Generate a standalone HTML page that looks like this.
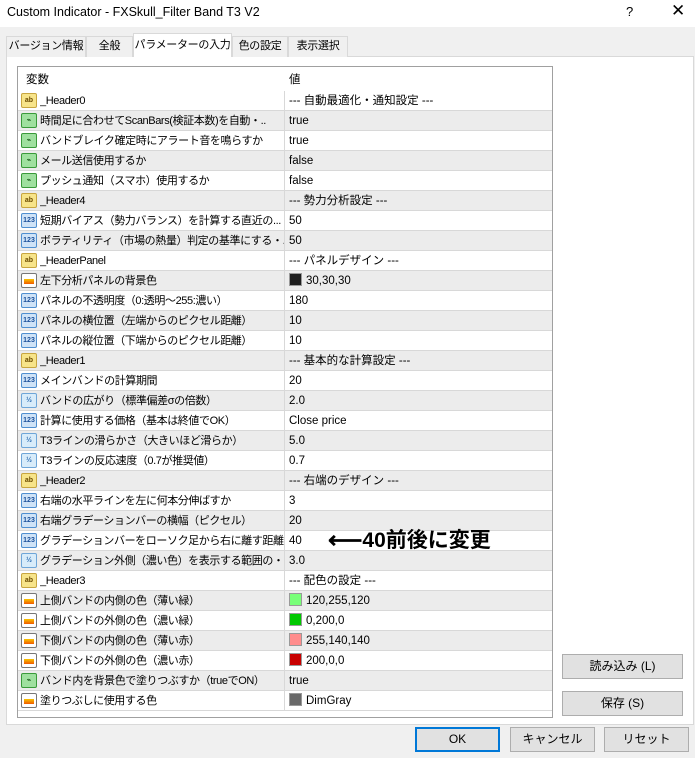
<!DOCTYPE html><html><head><meta charset="utf-8"><style>
*{box-sizing:border-box;margin:0;padding:0}
body{width:695px;height:758px;background:#f0f0f0;font-family:"Liberation Sans","Noto Sans CJK JP",sans-serif;font-size:11.5px;color:#000;position:relative;overflow:hidden}
.title{position:absolute;left:0;top:0;width:695px;height:27px;background:#fff}
.title span{position:absolute;left:7px;top:5px;font-size:12.5px}
.q{position:absolute;left:626px;top:4px;font-size:13px}
.x{position:absolute;left:671px;top:1px;font-size:17px;font-weight:300}
.tabs{position:absolute;top:36px;left:6px;height:21px}
.tab{position:absolute;top:0;height:21px;border:1px solid #d9d9d9;border-bottom:none;background:#f0f0f0;line-height:19px;text-align:center;font-size:11px;letter-spacing:-0.3px;white-space:nowrap;overflow:hidden}
.tab.act{top:-3px;height:24px;line-height:22px;background:#fff;z-index:2}
.panel{position:absolute;left:6px;top:56px;width:688px;height:669px;border:1px solid #d9d9d9;background:#fff}
.tbl{position:absolute;left:17px;top:66px;width:536px;height:652px;border:1px solid #a0a0a0;background:#fff}
.hdr{position:absolute;left:0;top:0;width:534px;height:24px}
.hdr span{position:absolute;top:1px;line-height:24px}
.r{position:absolute;left:0;width:534px;height:20px;border-bottom:1px solid #d8d8d8;line-height:21px}
.r.g{background:#ececec}
.r .n{position:absolute;left:22px;top:0;white-space:nowrap;width:244px;overflow:hidden;font-size:11px;letter-spacing:-0.4px}
.r .v{position:absolute;left:266px;top:0;height:19px;border-left:1px solid #d8d8d8;padding-left:4px;width:268px;white-space:nowrap}
.ic{position:absolute;left:3px;top:2px;width:16px;height:15px;border:1px solid #888;border-radius:2px;font-size:7px;font-weight:bold;line-height:13px;text-align:center;font-family:"Liberation Sans",sans-serif}
.ab{background:#f7e48a;border-color:#c8a640;color:#6b4a00}
.bo{background:#9fe09f;border-color:#3a9a3a;color:#1b5e1b}
.in{background:#cfe3f7;border-color:#4f8fd0;color:#1a4f9a}
.db{background:#d8ecfa;border-color:#6fa6d8;color:#2a6ab0}
.co{background:#fff;border-color:#777}
.co::after{content:"";position:absolute;left:2px;top:5px;width:10px;height:5px;background:linear-gradient(#f7c400,#f05a00)}
.sw{display:inline-block;width:13px;height:13px;vertical-align:-2px;margin-right:4px;border:1px solid #999}
.btn{position:absolute;height:25px;background:#e1e1e1;border:1px solid #adadad;text-align:center;line-height:23px;font-size:12px}
.note{position:absolute;left:328px;top:524px;font-size:21px;font-weight:bold;white-space:nowrap}
.note b{font-size:24px;vertical-align:-1px}
</style></head><body>
<div class="title"><span>Custom Indicator - FXSkull_Filter Band T3 V2</span><div class="q">?</div><div class="x">✕</div></div>
<div class="panel"></div>
<div class="tabs">
<div class="tab" style="left:0;width:80px">バージョン情報</div>
<div class="tab" style="left:80px;width:47px">全般</div>
<div class="tab act" style="left:127px;width:99px">パラメーターの入力</div>
<div class="tab" style="left:226px;width:56px">色の設定</div>
<div class="tab" style="left:282px;width:60px">表示選択</div>
</div>
<div class="tbl">
<div class="hdr"><span style="left:8px">変数</span><span style="left:271px">値</span></div>
<div class="r" style="top:24px"><div class="ic ab">ab</div><span class="n">_Header0</span><span class="v">--- 自動最適化・通知設定 ---</span></div>
<div class="r g" style="top:44px"><div class="ic bo">⌁</div><span class="n">時間足に合わせてScanBars(検証本数)を自動・..</span><span class="v">true</span></div>
<div class="r" style="top:64px"><div class="ic bo">⌁</div><span class="n">バンドブレイク確定時にアラート音を鳴らすか</span><span class="v">true</span></div>
<div class="r g" style="top:84px"><div class="ic bo">⌁</div><span class="n">メール送信使用するか</span><span class="v">false</span></div>
<div class="r" style="top:104px"><div class="ic bo">⌁</div><span class="n">プッシュ通知（スマホ）使用するか</span><span class="v">false</span></div>
<div class="r g" style="top:124px"><div class="ic ab">ab</div><span class="n">_Header4</span><span class="v">--- 勢力分析設定 ---</span></div>
<div class="r" style="top:144px"><div class="ic in">123</div><span class="n">短期バイアス（勢力バランス）を計算する直近の...</span><span class="v">50</span></div>
<div class="r g" style="top:164px"><div class="ic in">123</div><span class="n">ボラティリティ（市場の熱量）判定の基準にする・..</span><span class="v">50</span></div>
<div class="r" style="top:184px"><div class="ic ab">ab</div><span class="n">_HeaderPanel</span><span class="v">--- パネルデザイン ---</span></div>
<div class="r g" style="top:204px"><div class="ic co"></div><span class="n">左下分析パネルの背景色</span><span class="v"><i class="sw" style="background:#1e1e1e"></i>30,30,30</span></div>
<div class="r" style="top:224px"><div class="ic in">123</div><span class="n">パネルの不透明度（0:透明〜255:濃い）</span><span class="v">180</span></div>
<div class="r g" style="top:244px"><div class="ic in">123</div><span class="n">パネルの横位置（左端からのピクセル距離）</span><span class="v">10</span></div>
<div class="r" style="top:264px"><div class="ic in">123</div><span class="n">パネルの縦位置（下端からのピクセル距離）</span><span class="v">10</span></div>
<div class="r g" style="top:284px"><div class="ic ab">ab</div><span class="n">_Header1</span><span class="v">--- 基本的な計算設定 ---</span></div>
<div class="r" style="top:304px"><div class="ic in">123</div><span class="n">メインバンドの計算期間</span><span class="v">20</span></div>
<div class="r g" style="top:324px"><div class="ic db">½</div><span class="n">バンドの広がり（標準偏差σの倍数）</span><span class="v">2.0</span></div>
<div class="r" style="top:344px"><div class="ic in">123</div><span class="n">計算に使用する価格（基本は終値でOK）</span><span class="v">Close price</span></div>
<div class="r g" style="top:364px"><div class="ic db">½</div><span class="n">T3ラインの滑らかさ（大きいほど滑らか）</span><span class="v">5.0</span></div>
<div class="r" style="top:384px"><div class="ic db">½</div><span class="n">T3ラインの反応速度（0.7が推奨値）</span><span class="v">0.7</span></div>
<div class="r g" style="top:404px"><div class="ic ab">ab</div><span class="n">_Header2</span><span class="v">--- 右端のデザイン ---</span></div>
<div class="r" style="top:424px"><div class="ic in">123</div><span class="n">右端の水平ラインを左に何本分伸ばすか</span><span class="v">3</span></div>
<div class="r g" style="top:444px"><div class="ic in">123</div><span class="n">右端グラデーションバーの横幅（ピクセル）</span><span class="v">20</span></div>
<div class="r" style="top:464px"><div class="ic in">123</div><span class="n">グラデーションバーをローソク足から右に離す距離</span><span class="v">40</span></div>
<div class="r g" style="top:484px"><div class="ic db">½</div><span class="n">グラデーション外側（濃い色）を表示する範囲の・..</span><span class="v">3.0</span></div>
<div class="r" style="top:504px"><div class="ic ab">ab</div><span class="n">_Header3</span><span class="v">--- 配色の設定 ---</span></div>
<div class="r g" style="top:524px"><div class="ic co"></div><span class="n">上側バンドの内側の色（薄い緑）</span><span class="v"><i class="sw" style="background:#78ff78"></i>120,255,120</span></div>
<div class="r" style="top:544px"><div class="ic co"></div><span class="n">上側バンドの外側の色（濃い緑）</span><span class="v"><i class="sw" style="background:#00c800"></i>0,200,0</span></div>
<div class="r g" style="top:564px"><div class="ic co"></div><span class="n">下側バンドの内側の色（薄い赤）</span><span class="v"><i class="sw" style="background:#ff8c8c"></i>255,140,140</span></div>
<div class="r" style="top:584px"><div class="ic co"></div><span class="n">下側バンドの外側の色（濃い赤）</span><span class="v"><i class="sw" style="background:#c80000"></i>200,0,0</span></div>
<div class="r g" style="top:604px"><div class="ic bo">⌁</div><span class="n">バンド内を背景色で塗りつぶすか（trueでON）</span><span class="v">true</span></div>
<div class="r" style="top:624px"><div class="ic co"></div><span class="n">塗りつぶしに使用する色</span><span class="v"><i class="sw" style="background:#696969"></i>DimGray</span></div>
</div>
<div class="note"><b>⟵</b>40前後に変更</div>
<div class="btn" style="left:562px;top:654px;width:121px">読み込み (L)</div>
<div class="btn" style="left:562px;top:691px;width:121px">保存 (S)</div>
<div class="btn" style="left:415px;top:727px;width:85px;border:2px solid #0078d7;line-height:21px">OK</div>
<div class="btn" style="left:510px;top:727px;width:85px">キャンセル</div>
<div class="btn" style="left:604px;top:727px;width:85px">リセット</div>
</body></html>
